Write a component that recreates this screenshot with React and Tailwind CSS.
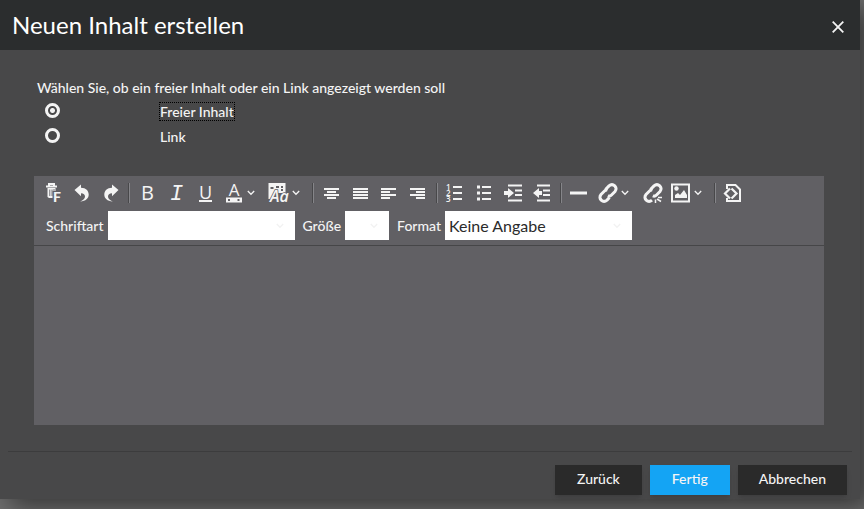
import React, { useState } from "react";

function Icon({ children, width = 20 }) {
  return (
    <svg width={width} height="20" viewBox={`0 0 ${width} 20`} fill="none" stroke="currentColor" strokeWidth="2" aria-hidden="true" className="shrink-0 overflow-visible">
      {children}
    </svg>
  );
}

function Chevron() {
  return (
    <svg width="8" height="6" viewBox="0 0 8 6" fill="none" stroke="currentColor" strokeWidth="1.3" aria-hidden="true" className="shrink-0">
      <path d="M.8 1 4 4.300 7.200 1" />
    </svg>
  );
}

function Tool({ label, children }) {
  return (
    <button type="button" aria-label={label} title={label} className="flex h-[34px] w-[29px] items-center justify-center">
      {children}
    </button>
  );
}

function MenuTool({ label, children }) {
  return (
    <button type="button" aria-label={label} title={label} className="flex h-[34px] items-center gap-[3px] pr-[9px] pl-1">
      {children}
      <Chevron />
    </button>
  );
}

function Separator() {
  return <span className="mx-[3px] h-5 w-0.5 border-r border-l border-r-[#858589] border-l-[#48484a]" />;
}

function Lines({ rows }) {
  return (
    <Icon>
      {rows.map(([a, b], i) => (
        <path key={i} d={`M${a} ${6 + i * 3}H${b}`} />
      ))}
    </Icon>
  );
}

function Toolbar() {
  return (
    <div role="toolbar" aria-label="Formatierung" className="flex flex-wrap items-center pl-1">
      <Tool label="Formatierung entfernen">
        <Icon>
          <path d="M3 3.500h11M6 2.500v-1.500h5v1.500" strokeWidth="2" />
          <path d="M4.500 5h8v3h-3v7h-3.500l-1.500-1z" fill="currentColor" stroke="none" />
          <path d="M6.800 6.500v6.500M9 6.500v6.500M11 6v2" stroke="#616064" strokeWidth=".9" />
          <text x="10" y="19" fontSize="14" fontWeight="900" fill="currentColor" stroke="#616064" strokeWidth="1" paintOrder="stroke" className="font-['Lato',sans-serif]">F</text>
        </Icon>
      </Tool>
      <Tool label="Rückgängig">
        <Icon>
          <path d="M2.500 7 9 1.500v3.300c5 .2 7.700 3 7.700 6.800 0 3.800-3 6.800-8.500 6.800 3-1.200 4.800-3 4.800-5 0-2-1.300-3-4-3.200v3z" fill="currentColor" stroke="none" />
        </Icon>
      </Tool>
      <Tool label="Wiederholen">
        <Icon>
          <path d="M17.500 7 11 1.500v3.300c-5 .2-7.700 3-7.700 6.800 0 3.800 3 6.800 8.500 6.800-3-1.200-4.800-3-4.800-5 0-2 1.300-3 4-3.200v3z" fill="currentColor" stroke="none" />
        </Icon>
      </Tool>
      <Separator />
      <Tool label="Fett">
        <span className="font-['Open_Sans',sans-serif] text-[20px] leading-5 font-normal">B</span>
      </Tool>
      <Tool label="Kursiv">
        <span className="pt-1 font-['Liberation_Mono',monospace] text-[22px] leading-5 font-normal italic">I</span>
      </Tool>
      <Tool label="Unterstrichen">
        <span className="border-b-2 font-['Open_Sans',sans-serif] text-[18px] leading-4 font-normal">U</span>
      </Tool>
      <MenuTool label="Schriftfarbe">
        <Icon>
          <text x="10" y="13" fontSize="17" textAnchor="middle" fill="currentColor" stroke="none" className="font-['Open_Sans',sans-serif]">A</text>
          <path d="M2 17h16" strokeWidth="5" />
          <path d="M4 17h2M13.500 17h2" stroke="#616064" />
        </Icon>
      </MenuTool>
      <MenuTool label="Hintergrundfarbe">
        <Icon width={21}>
          <path d="M.5 0h17v10h-9l-4 6h-4z" fill="currentColor" stroke="none" />
          <path d="M2.500 5h3M8 4h3M13 4h2M13 7h2" stroke="#616064" />
          <text x="2" y="19" fontSize="16" fontWeight="600" fontStyle="italic" fill="currentColor" stroke="#616064" strokeWidth="1.500" paintOrder="stroke" className="font-['Open_Sans',sans-serif]">Aa</text>
        </Icon>
      </MenuTool>
      <Separator />
      <Tool label="Zentriert"><Lines rows={[[2, 17], [5, 14], [2, 17], [5, 14]]} /></Tool>
      <Tool label="Blocksatz"><Lines rows={[[2, 17], [2, 17], [2, 17], [2, 17]]} /></Tool>
      <Tool label="Linksbündig"><Lines rows={[[1, 16], [1, 10], [1, 16], [1, 10]]} /></Tool>
      <Tool label="Rechtsbündig"><Lines rows={[[1, 16], [7, 16], [1, 16], [7, 16]]} /></Tool>
      <Separator />
      <Tool label="Nummerierte Liste">
        <Icon>
          <path d="M7 4h9M7 10h9M7 16h9" />
          <g fontSize="8" fontWeight="600" fill="currentColor" stroke="none" className="font-['Open_Sans',sans-serif]">
            <text x="0" y="7">1</text>
            <text x="0" y="13">2</text>
            <text x="0" y="19">3</text>
          </g>
        </Icon>
      </Tool>
      <Tool label="Aufzählung">
        <Icon>
          <path d="M7 4h9M7 10h9M7 16h9" />
          <path d="M2 4h3M2 10h3M2 16h3" strokeWidth="3" />
        </Icon>
      </Tool>
      <Tool label="Einzug vergrößern">
        <Icon>
          <path d="M4 2.500h14M11 7.500h7M11 12h7M4 17.500h14" />
          <path d="M0 8h4V5l6 5-6 5v-3H0z" fill="currentColor" stroke="none" />
        </Icon>
      </Tool>
      <Tool label="Einzug verkleinern">
        <Icon>
          <path d="M4 2.500h13M10 7.500h7M10 12h7M4 17.500h13" />
          <path d="M9 8H6V5l-6 5 6 5v-3h3z" fill="currentColor" stroke="none" />
        </Icon>
      </Tool>
      <Separator />
      <Tool label="Horizontale Linie"><Icon><path d="M0 10h17" strokeWidth="3" /></Icon></Tool>
      <MenuTool label="Link einfügen">
        <Icon>
          <g strokeWidth="3">
            <path d="m7.500 6.500 3.500-3.600c4-3.600 9.400 1.700 6 5.600L13.500 12c-1.200 1.200-2.600 1.300-3.700.8" />
            <path d="m11.500 14.500-2.500 2.600c-4 3.600-9.400-1.700-6-5.600L6.500 8c1-1 2-1.200 3-.9" />
          </g>
        </Icon>
      </MenuTool>
      <Tool label="Link entfernen">
        <Icon>
          <g strokeWidth="3">
            <path d="m7.500 6.500 3.500-3.600c4-3.600 9.400 1.700 6 5.600L13.500 12c-1.200 1.200-2.600 1.300-3.700.8" />
            <path d="M9 17.100c-4 3.600-9.400-1.700-6-5.600L6.500 8c1-1 2-1.200 3-.9" />
          </g>
          <path d="M15 14.500h4M14 16l4 2.500M12.500 16.500v3.500" strokeWidth="1.500" />
        </Icon>
      </Tool>
      <MenuTool label="Bild einfügen">
        <Icon>
          <path d="M1 1.500h17v17H1z" />
          <circle cx="5.500" cy="5.500" r="2.200" fill="currentColor" stroke="none" />
          <path d="M4 15v-3l3-2 2 2 4-5 3 5v3z" fill="currentColor" stroke="none" />
        </Icon>
      </MenuTool>
      <Separator />
      <Tool label="Quelltext">
        <Icon>
          <path d="M3 6V2h8.500L16 6.500V18H3v-3" />
          <path d="m6 5.500-5 5 5 5M7.500 5.500l5 5-5 5" strokeWidth="2.200" />
        </Icon>
      </Tool>
    </div>
  );
}

function SelectField({ id, label, options, widthClass }) {
  return (
    <div className="flex items-center gap-1">
      <label htmlFor={id}>{label}</label>
      <div className={`relative ${widthClass}`}>
        <select id={id} className="block h-[29px] w-full appearance-none bg-white pl-1 text-[16px] font-normal text-[#2b2b2b]">
          {options.map((o) => (
            <option key={o}>{o}</option>
          ))}
        </select>
        <span className="pointer-events-none absolute inset-y-0 right-[11px] flex items-center text-[#f2f2f2]">
          <Chevron />
        </span>
      </div>
    </div>
  );
}

const choices = [
  ["free", "Freier Inhalt"],
  ["link", "Link"],
];

export default function App() {
  const [kind, setKind] = useState("free");
  return (
    <div className="min-h-screen overflow-hidden bg-[#6e6e6e] pr-1 pb-2.5 font-['Lato',sans-serif] text-[14px] leading-5 font-medium text-[#f4f4f4]">
      <section role="dialog" aria-labelledby="dialog-title" className="bg-[#484849] shadow-[10px_8px_24px_rgba(0,0,0,0.5)]">
        <header className="flex h-[50px] items-center justify-between bg-[#2b2d2e] pr-4 pl-3">
          <h1 id="dialog-title" className="text-[24px] leading-8 font-normal text-white">Neuen Inhalt erstellen</h1>
          <button type="button" aria-label="Schließen" className="pt-1">
            <svg width="12" height="12" viewBox="0 0 12 12" stroke="currentColor" strokeWidth="1.800" aria-hidden="true">
              <path d="m.7.7 10.600 10.600M11.300.7.7 11.300" />
            </svg>
          </button>
        </header>

        <main className="px-[34px] pt-7">
          <fieldset className="pl-[3px]">
            <legend>Wählen Sie, ob ein freier Inhalt oder ein Link angezeigt werden soll</legend>
            <div className="pt-px">
              {choices.map(([value, text]) => (
                <div key={value} className="flex h-[25px] items-center pl-2">
                  <input
                    type="radio"
                    id={value}
                    name="kind"
                    checked={kind === value}
                    onChange={() => setKind(value)}
                    className="mr-[99px] mb-0.5 size-[15px] appearance-none rounded-full border-3 border-[#f4f4f4] checked:bg-[radial-gradient(circle,#f4f4f4_2px,transparent_3px)]"
                  />
                  <label htmlFor={value} className={kind === value ? "border border-dotted border-black leading-[17px]" : "border border-transparent leading-[17px]"}>
                    {text}
                  </label>
                </div>
              ))}
            </div>
          </fieldset>

          <div className="mt-[27px] mr-[2px] bg-[#616064]">
            <div className="border-b border-[#464648] pb-[5px]">
              <Toolbar />
              <div className="flex flex-wrap items-center gap-2 pt-px pl-3">
                <SelectField id="font" label="Schriftart" options={[""]} widthClass="w-[187px]" />
                <SelectField id="size" label="Größe" options={[""]} widthClass="w-11" />
                <SelectField id="format" label="Format" options={["Keine Angabe"]} widthClass="w-[187px]" />
              </div>
            </div>
            <textarea aria-label="Inhalt" className="block h-[179px] w-full resize-none bg-transparent p-2 outline-none" />
          </div>
        </main>

        <footer className="mx-2 mt-[26px] flex justify-end gap-2 border-t border-[#3c3c3d] pt-[13px] pr-[5px] pb-1">
          <button type="button" className="h-[30px] bg-[#2a2a2a] px-[22px] pb-0.5 shadow-md">Zurück</button>
          <button type="button" className="h-[30px] bg-[#14a4f4] px-[22px] pb-0.5 shadow-md">Fertig</button>
          <button type="button" className="h-[30px] bg-[#2a2a2a] px-[21px] pb-0.5 shadow-md">Abbrechen</button>
        </footer>
      </section>
    </div>
  );
}
